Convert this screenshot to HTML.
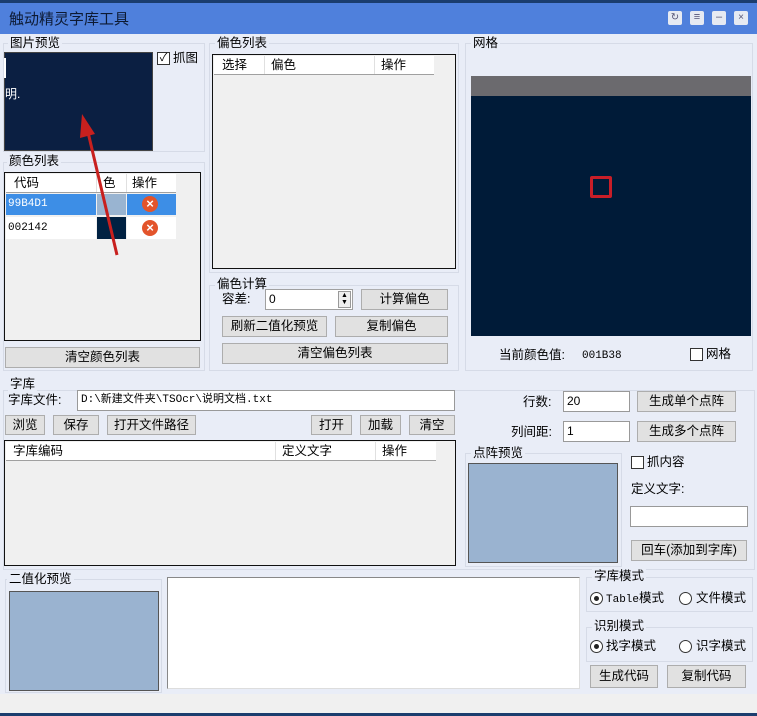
<!DOCTYPE html>
<html><head><meta charset="utf-8"><style>
*{box-sizing:border-box;margin:0;padding:0}
body{width:757px;height:716px;overflow:hidden;background:#e9edf7;font:12px "Liberation Sans","Noto Sans CJK SC","WenQuanYi Zen Hei",sans-serif;color:#000;position:relative}
div,span{position:absolute}
.g{border:1px solid #d6dbe7}
.lb{background:#e9edf7;padding:0 2px;line-height:14px;font-size:12.5px;white-space:nowrap}
.t{white-space:nowrap;line-height:14px;font-size:12.5px}
.btn{background:#e1e1e1;border:1px solid #adadad;text-align:center;font-size:12.5px;line-height:18px;white-space:nowrap}
.inp{background:#fff;border:1px solid #7a7a7a;font-size:12px;line-height:18px;padding-left:3px;white-space:nowrap}
.list{background:#f0f0f0;border:1px solid #111}
.hd{background:#fff;border-bottom:1px solid #a0a0a0;height:19px}
.hd span{top:2px;font-size:12.5px;line-height:14px}
.sep{width:1px;background:#e0e0e0;top:0;height:18px}
.cb{width:13px;height:13px;border:1px solid #333;background:#fff}
.rd{width:13px;height:13px;border:1px solid #333;border-radius:50%;background:#fff}
.mono{font-family:"Liberation Mono",monospace;font-size:11px}
</style></head><body>
<div style="left:0;top:0;width:757px;height:3px;background:#1b3d6e"></div>
<div style="left:0;top:3px;width:757px;height:31px;background:#4f80dc"></div>
<div class="t" style="left:9px;top:11px;font-size:15px;line-height:17px;color:#0d1a33">触动精灵字库工具</div>
<div style="left:668px;top:11px;width:14px;height:14px;background:#e6eaf2;border-radius:2px;font-size:10px;text-align:center;line-height:14px;color:#557">↻</div>
<div style="left:690px;top:11px;width:14px;height:14px;background:#e6eaf2;border-radius:2px;font-size:11px;text-align:center;line-height:13px;color:#557">≡</div>
<div style="left:712px;top:11px;width:14px;height:14px;background:#e6eaf2;border-radius:2px;font-size:11px;text-align:center;line-height:13px;color:#557">–</div>
<div style="left:734px;top:11px;width:14px;height:14px;background:#e6eaf2;border-radius:2px;font-size:10px;text-align:center;line-height:14px;color:#557">×</div>

<!-- 图片预览 -->
<div class="g" style="left:3px;top:43px;width:202px;height:109px"></div>
<div class="lb" style="left:8px;top:36px">图片预览</div>
<div style="left:4px;top:52px;width:149px;height:99px;background:#0b1f42;border:1px solid #444"></div>
<div style="left:4px;top:58px;width:2px;height:20px;background:#fff"></div>
<div class="t" style="left:5px;top:87px;color:#fff;font-size:12px">明.</div>
<div class="cb" style="left:157px;top:52px;font-size:11px;line-height:11px;text-align:center">✓</div>
<div class="t" style="left:173px;top:51px">抓图</div>

<!-- 偏色列表 -->
<div class="g" style="left:209px;top:43px;width:250px;height:230px"></div>
<div class="lb" style="left:215px;top:36px">偏色列表</div>
<div class="list" style="left:212px;top:54px;width:244px;height:215px">
<div class="hd" style="left:1px;top:1px;width:220px"><span style="left:8px">选择</span><span style="left:57px">偏色</span><span style="left:167px">操作</span><div class="sep" style="left:50px"></div><div class="sep" style="left:160px"></div></div></div>

<!-- 颜色列表 -->
<div class="g" style="left:3px;top:162px;width:202px;height:209px"></div>
<div class="lb" style="left:7px;top:154px">颜色列表</div>
<div class="list" style="left:4px;top:172px;width:197px;height:169px">
<div class="hd" style="left:1px;top:1px;width:170px"><span style="left:8px">代码</span><span style="left:97px">色</span><span style="left:126px">操作</span><div class="sep" style="left:90px"></div><div class="sep" style="left:120px"></div></div>
<div style="left:1px;top:21px;width:90px;height:21px;background:#3d8ee6;color:#fff;line-height:21px;padding-left:2px" class="mono">99B4D1</div>
<div style="left:92px;top:21px;width:29px;height:21px;background:#99b4d1"></div>
<div style="left:122px;top:21px;width:49px;height:21px;background:#3d8ee6"></div>
<div style="left:1px;top:44px;width:90px;height:22px;background:#fff;line-height:22px;padding-left:2px" class="mono">002142</div>
<div style="left:92px;top:44px;width:29px;height:22px;background:#002142"></div>
<div style="left:122px;top:44px;width:49px;height:22px;background:#fff"></div>
<div style="left:137px;top:23px;width:16px;height:16px;border-radius:50%;background:#e3542b;color:#fff;font-weight:bold;font-size:13px;line-height:16px;text-align:center">×</div>
<div style="left:137px;top:47px;width:16px;height:16px;border-radius:50%;background:#e3542b;color:#fff;font-weight:bold;font-size:13px;line-height:16px;text-align:center">×</div>
</div>
<svg style="position:absolute;left:75px;top:110px" width="60" height="150"><line x1="42" y1="145" x2="12" y2="18" stroke="#c8201e" stroke-width="3"/><polygon points="7,4 5,28 20,24" fill="#c8201e"/></svg>
<div class="btn" style="left:5px;top:347px;width:195px;height:21px">清空颜色列表</div>

<!-- 偏色计算 -->
<div class="g" style="left:209px;top:285px;width:250px;height:86px"></div>
<div class="lb" style="left:215px;top:277px">偏色计算</div>
<div class="t" style="left:222px;top:292px">容差:</div>
<div class="inp" style="left:265px;top:289px;width:88px;height:21px;border-color:#a0a0a0">0</div>
<div style="left:338px;top:291px;width:13px;height:17px;background:#eee;border:1px solid #999;font-size:7px;line-height:7px;text-align:center">▲<br>▼</div>
<div class="btn" style="left:361px;top:289px;width:87px;height:21px">计算偏色</div>
<div class="btn" style="left:222px;top:316px;width:105px;height:21px">刷新二值化预览</div>
<div class="btn" style="left:335px;top:316px;width:113px;height:21px">复制偏色</div>
<div class="btn" style="left:222px;top:343px;width:226px;height:21px">清空偏色列表</div>

<!-- 网格 -->
<div class="g" style="left:465px;top:43px;width:288px;height:328px"></div>
<div class="lb" style="left:471px;top:36px">网格</div>
<div style="left:471px;top:76px;width:280px;height:20px;background:#6b6a6e"></div>
<div style="left:471px;top:96px;width:280px;height:240px;background:#001b38"></div>
<div style="left:590px;top:176px;width:22px;height:22px;border:3px solid #c81e28;border-radius:2px"></div>
<div class="t" style="left:499px;top:348px">当前颜色值:</div>
<div class="t mono" style="left:582px;top:349px">001B38</div>
<div class="cb" style="left:690px;top:348px"></div>
<div class="t" style="left:706px;top:347px">网格</div>

<!-- 字库 -->
<div class="g" style="left:3px;top:390px;width:752px;height:180px"></div>
<div class="lb" style="left:8px;top:377px">字库</div>
<div class="t" style="left:8px;top:393px">字库文件:</div>
<div class="inp mono" style="left:77px;top:390px;width:378px;height:21px;border-color:#999">D:\新建文件夹\TSOcr\说明文档.txt</div>
<div class="btn" style="left:5px;top:415px;width:40px;height:20px">浏览</div>
<div class="btn" style="left:53px;top:415px;width:46px;height:20px">保存</div>
<div class="btn" style="left:107px;top:415px;width:89px;height:20px">打开文件路径</div>
<div class="btn" style="left:311px;top:415px;width:41px;height:20px">打开</div>
<div class="btn" style="left:360px;top:415px;width:41px;height:20px">加载</div>
<div class="btn" style="left:409px;top:415px;width:46px;height:20px">清空</div>
<div class="list" style="left:4px;top:440px;width:452px;height:126px">
<div class="hd" style="left:1px;top:1px;width:430px"><span style="left:7px">字库编码</span><span style="left:276px">定义文字</span><span style="left:376px">操作</span><div class="sep" style="left:269px"></div><div class="sep" style="left:369px"></div></div></div>

<div class="t" style="left:523px;top:395px">行数:</div>
<div class="inp" style="left:563px;top:391px;width:67px;height:21px;border-color:#999">20</div>
<div class="btn" style="left:637px;top:391px;width:99px;height:21px">生成单个点阵</div>
<div class="t" style="left:511px;top:425px">列间距:</div>
<div class="inp" style="left:563px;top:421px;width:67px;height:21px;border-color:#999">1</div>
<div class="btn" style="left:637px;top:421px;width:99px;height:21px">生成多个点阵</div>

<div class="g" style="left:465px;top:453px;width:157px;height:114px"></div>
<div class="lb" style="left:471px;top:446px">点阵预览</div>
<div style="left:468px;top:463px;width:150px;height:100px;background:#9ab3d0;border:1px solid #555"></div>
<div class="cb" style="left:631px;top:456px"></div>
<div class="t" style="left:647px;top:455px">抓内容</div>
<div class="t" style="left:631px;top:482px">定义文字:</div>
<div class="inp" style="left:630px;top:506px;width:118px;height:21px;border-color:#999"></div>
<div class="btn" style="left:631px;top:540px;width:116px;height:21px">回车(添加到字库)</div>

<!-- 二值化预览 -->
<div class="g" style="left:5px;top:579px;width:157px;height:114px"></div>
<div class="lb" style="left:7px;top:572px">二值化预览</div>
<div style="left:9px;top:591px;width:150px;height:100px;background:#9ab3d0;border:1px solid #555"></div>
<div style="left:167px;top:577px;width:413px;height:112px;background:#fff;border:1px solid #888;border-right-color:#ddd;border-bottom-color:#ddd"></div>

<div class="g" style="left:586px;top:577px;width:167px;height:35px"></div>
<div class="lb" style="left:592px;top:569px">字库模式</div>
<div class="rd" style="left:590px;top:592px"><span style="left:3px;top:3px;width:5px;height:5px;border-radius:50%;background:#222"></span></div>
<div class="t" style="left:606px;top:591px"><span class="mono" style="position:static">Table</span>模式</div>
<div class="rd" style="left:679px;top:592px"></div>
<div class="t" style="left:696px;top:591px">文件模式</div>
<div class="g" style="left:586px;top:627px;width:167px;height:35px"></div>
<div class="lb" style="left:592px;top:619px">识别模式</div>
<div class="rd" style="left:590px;top:640px"><span style="left:3px;top:3px;width:5px;height:5px;border-radius:50%;background:#222"></span></div>
<div class="t" style="left:606px;top:639px">找字模式</div>
<div class="rd" style="left:679px;top:640px"></div>
<div class="t" style="left:696px;top:639px">识字模式</div>
<div class="btn" style="left:590px;top:665px;width:68px;height:23px;line-height:21px">生成代码</div>
<div class="btn" style="left:667px;top:665px;width:79px;height:23px;line-height:21px">复制代码</div>

<div style="left:0;top:694px;width:757px;height:19px;background:#f0f0f0"></div>
<div style="left:0;top:713px;width:757px;height:3px;background:#1b3d6e"></div>
</body></html>
